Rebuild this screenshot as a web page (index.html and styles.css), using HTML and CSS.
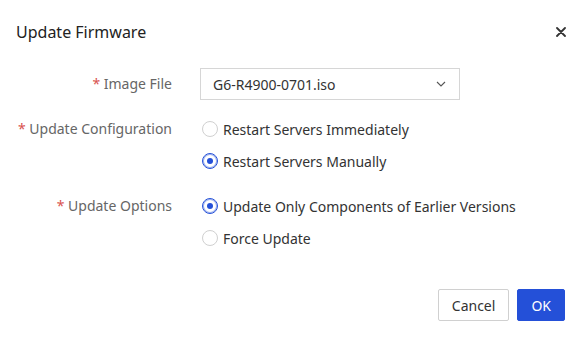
FILE: index.html
```html
<!DOCTYPE html>
<html>
<head>
<meta charset="utf-8">
<link rel="stylesheet" href="styles.css">
</head>
<body>
<div class="dialog">
  <div class="header">
    <div class="title">Update Firmware</div>
    <button class="close" aria-label="Close">
      <svg width="10" height="10" viewBox="0 0 10 10"><path d="M1 1L9 9M9 1L1 9" stroke="#333" stroke-width="1.8" stroke-linecap="round"/></svg>
    </button>
  </div>
  <div class="body">
    <div class="form-item">
      <div class="label"><span class="req">*</span> Image File</div>
      <div class="control">
        <div class="select">
          <span>G6-R4900-0701.iso</span>
          <svg width="10" height="6" viewBox="0 0 10 6"><path d="M1 1L5 5L9 1" fill="none" stroke="#555" stroke-width="1.1"/></svg>
        </div>
      </div>
    </div>
    <div class="form-item">
      <div class="label"><span class="req">*</span> Update Configuration</div>
      <div class="control radios">
        <label class="radio"><span class="dot"></span>Restart Servers Immediately</label>
        <label class="radio"><span class="dot on"></span>Restart Servers Manually</label>
      </div>
    </div>
    <div class="form-item">
      <div class="label"><span class="req">*</span> Update Options</div>
      <div class="control radios">
        <label class="radio"><span class="dot on"></span>Update Only Components of Earlier Versions</label>
        <label class="radio"><span class="dot"></span>Force Update</label>
      </div>
    </div>
  </div>
  <div class="footer">
    <button class="btn">Cancel</button>
    <button class="btn primary">OK</button>
  </div>
</div>
</body>
</html>
```
FILE: styles.css
```css
html, body {
  margin: 0;
  padding: 0;
  background: #fff;
}
body {
  font-family: "Noto Sans", "Open Sans", sans-serif;
  color: #333;
  width: 585px;
  height: 337px;
  overflow: hidden;
}
.dialog {
  display: flex;
  flex-direction: column;
  height: 337px;
}
.header {
  height: 64px;
  display: flex;
  align-items: center;
  justify-content: space-between;
  padding: 0 19px 0 16px;
}
.title {
  font-size: 16px;
  color: #222;
}
.close {
  border: none;
  background: none;
  padding: 0;
  display: flex;
  cursor: pointer;
}
.body {
  padding: 4px 16px 0 16px;
  display: flex;
  flex-direction: column;
  gap: 13px;
}
.form-item {
  display: flex;
  align-items: flex-start;
}
.label {
  width: 156px;
  text-align: right;
  font-size: 14px;
  line-height: 32px;
  color: #666;
}
.req {
  color: #d9534f;
}
.control {
  margin-left: 28px;
}
.select {
  width: 260px;
  height: 32px;
  box-sizing: border-box;
  border: 1px solid #d6d6d6;
  display: flex;
  align-items: center;
  justify-content: space-between;
  padding: 0 13px 0 12px;
  font-size: 14px;
  color: #333;
}
.radios {
  display: flex;
  flex-direction: column;
  margin-left: 30px;
}
.radio {
  display: flex;
  align-items: center;
  height: 32px;
  font-size: 14px;
  color: #333;
}
.dot {
  width: 16px;
  height: 16px;
  box-sizing: border-box;
  border: 1px solid #d0d0d0;
  border-radius: 50%;
  margin-right: 5px;
  position: relative;
}
.dot.on {
  border-color: #2450d8;
  box-shadow: inset 0 0 0 1px rgba(36, 80, 216, 0.45);
}
.dot.on::after {
  content: "";
  position: absolute;
  left: 4px;
  top: 4px;
  width: 6px;
  height: 6px;
  border-radius: 50%;
  background: #2450d8;
}
.footer {
  margin-top: auto;
  display: flex;
  justify-content: flex-end;
  gap: 8px;
  padding: 0 20px 16px 0;
}
.btn {
  height: 32px;
  border-radius: 2px;
  border: 1px solid #d0d0d0;
  background: #fff;
  font-family: inherit;
  font-size: 14px;
  color: #333;
  padding: 0 13px;
  min-width: 47px;
}
.btn.primary {
  background: #2450d8;
  border-color: #2450d8;
  color: #fff;
}
```
